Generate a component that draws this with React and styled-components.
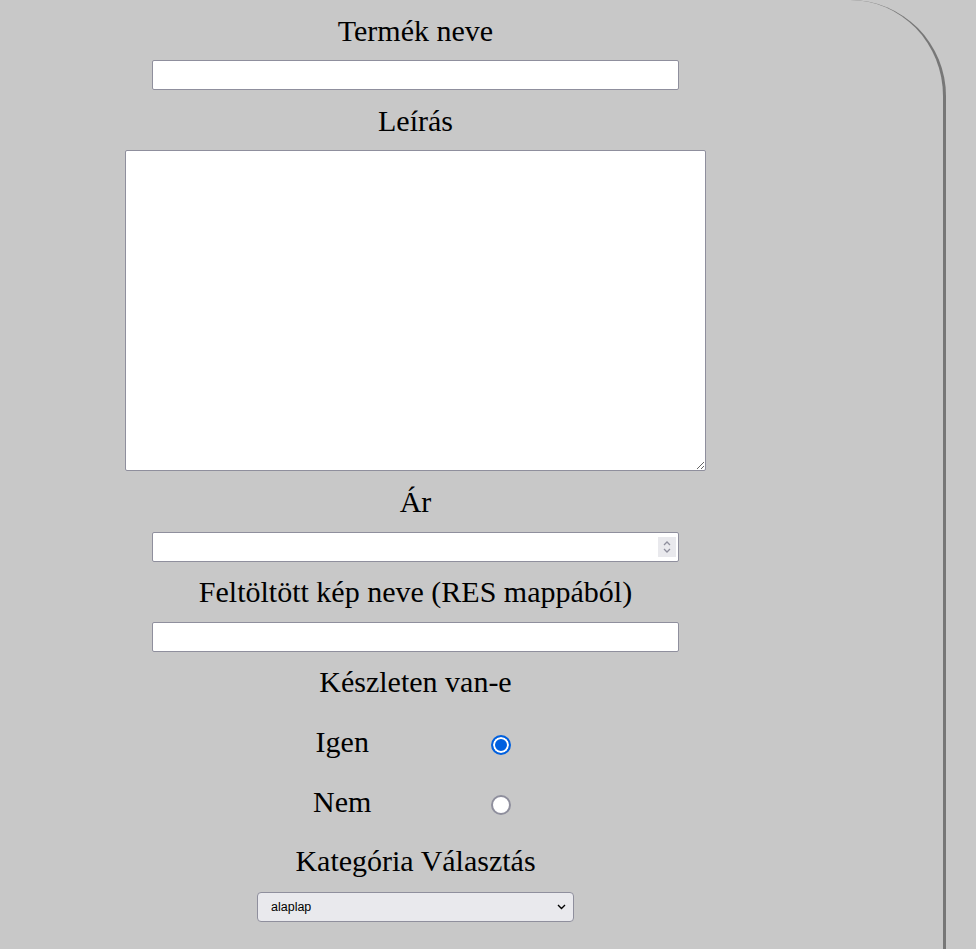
import React from "react";
import styled, { createGlobalStyle } from "styled-components";

const Global = createGlobalStyle`
  html, body { margin: 0; padding: 0; background: #c8c8c8; }
  body { font-family: "Liberation Serif", "Times New Roman", serif; color: #000; }
`;

const Panel = styled.div`
  box-sizing: border-box;
  width: 946px;
  min-height: 949px;
  border-right: 3px solid #777;
  border-top-right-radius: 96px;
  display: flex;
  flex-direction: column;
`;

const Form = styled.form`
  width: 831px;
  display: flex;
  flex-direction: column;
  align-items: center;
  padding-top: 14px;
`;

const Label = styled.label`
  display: block;
  font-size: 30px;
  line-height: 34px;
  margin: ${(p) => p.$mt ?? 14}px 0 ${(p) => p.$mb ?? 12}px;
  text-align: center;
`;

const TextInput = styled.input`
  box-sizing: border-box;
  width: 527px;
  height: 30px;
  margin: 0;
  border: 1px solid #8f8f9d;
  border-radius: 2px;
  background: #fff;
  padding: 0 6px;
  font-family: "Liberation Sans", sans-serif;
  font-size: 13px;
  -moz-appearance: textfield;
  &::-webkit-inner-spin-button,
  &::-webkit-outer-spin-button {
    -webkit-appearance: none;
    margin: 0;
  }
`;

const TextArea = styled.textarea`
  box-sizing: border-box;
  display: block;
  width: 581px;
  height: 321px;
  margin: 0;
  border: 1px solid #8f8f9d;
  border-radius: 2px;
  background: #fff;
`;

const Wrap = styled.div`
  position: relative;
  width: ${(p) => p.$w}px;
`;

const Spinner = styled.svg`
  position: absolute;
  right: 3px;
  top: 5px;
  pointer-events: none;
`;

const RadioRow = styled.div`
  display: grid;
  grid-template-columns: 158.5px 158.5px;
  align-items: center;
  padding-left: 12px;
  margin-top: ${(p) => p.$mt}px;
  height: 34px;
`;

const RadioText = styled.span`
  font-size: 30px;
  line-height: 34px;
  text-align: center;
`;

const Radio = styled.input`
  appearance: none;
  -webkit-appearance: none;
  box-sizing: border-box;
  width: 20px;
  height: 20px;
  margin: 5px auto 0;
  border-radius: 50%;
  border: 2px solid #8f8f9d;
  background: #fff;
  &:checked {
    border-color: #0060df;
    background: #0060df;
    box-shadow: inset 0 0 0 2px #fff;
  }
`;

const Select = styled.select`
  appearance: none;
  -webkit-appearance: none;
  box-sizing: border-box;
  width: 317px;
  height: 30px;
  margin: 0;
  padding: 0 24px 0 13px;
  border: 1px solid #8f8f9d;
  border-radius: 4px;
  background: #e9e9ed;
  color: #000;
  font-family: "Liberation Sans", Arial, sans-serif;
  font-size: 12.5px;
`;

const Chevron = styled.svg`
  position: absolute;
  right: 8px;
  top: 12px;
  pointer-events: none;
`;

export default function App() {
  return (
    <>
      <Global />
      <Panel>
        <Form onSubmit={(e) => e.preventDefault()}>
          <Label $mt={0} htmlFor="nev">Termék neve</Label>
          <TextInput id="nev" type="text" />

          <Label htmlFor="leiras">Leírás</Label>
          <TextArea id="leiras" />

          <Label $mb={13} htmlFor="ar">Ár</Label>
          <Wrap $w={527}>
            <TextInput id="ar" type="number" />
            <Spinner width="18" height="20" viewBox="0 0 18 20">
              <rect x="0" y="0" width="18" height="20" fill="#e9e9ed" />
              <path d="M6 8 L9 5 L12 8" fill="none" stroke="#8f8f9d" strokeWidth="1.3" />
              <path d="M6 12 L9 15 L12 12" fill="none" stroke="#8f8f9d" strokeWidth="1.3" />
            </Spinner>
          </Wrap>

          <Label $mt={13} $mb={13} htmlFor="kep">Feltöltött kép neve (RES mappából)</Label>
          <TextInput id="kep" type="text" />

          <Label as="div" $mt={13}>Készleten van-e</Label>
          <RadioRow $mt={14}>
            <RadioText>Igen</RadioText>
            <Radio type="radio" name="keszlet" defaultChecked />
          </RadioRow>
          <RadioRow $mt={26}>
            <RadioText>Nem</RadioText>
            <Radio type="radio" name="keszlet" />
          </RadioRow>

          <Label $mt={25} $mb={14} htmlFor="kat">Kategória Választás</Label>
          <Wrap $w={317}>
            <Select id="kat" defaultValue="alaplap">
              <option value="alaplap">alaplap</option>
              <option value="processzor">processzor</option>
              <option value="memoria">memória</option>
              <option value="videokartya">videókártya</option>
            </Select>
            <Chevron width="9" height="6" viewBox="0 0 9 6">
              <path d="M1 1 L4.5 4.5 L8 1" fill="none" stroke="#000" strokeWidth="1.4" />
            </Chevron>
          </Wrap>
        </Form>
      </Panel>
    </>
  );
}
